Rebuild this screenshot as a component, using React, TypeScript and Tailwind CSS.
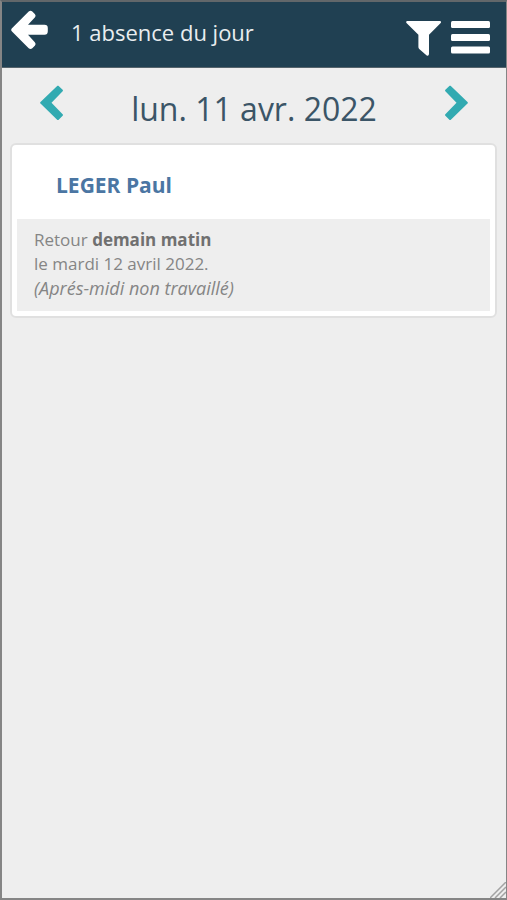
import type { ReactNode } from "react";

interface Absence {
  name: string;
  back: string;
  date: string;
  note: string;
}

const absences: Absence[] = [
  {
    name: "LEGER Paul",
    back: "demain matin",
    date: "le mardi 12 avril 2022.",
    note: "(Aprés-midi non travaillé)",
  },
];

function IconButton({ label, children }: { label: string; children: ReactNode }) {
  return (
    <button type="button" aria-label={label} className="block cursor-pointer">
      {children}
    </button>
  );
}

function Header() {
  return (
    <header className="flex h-[66px] items-start border-b border-[#56646c] bg-[#204052] pr-4 pl-[9px] text-white">
      <div className="pt-2">
        <IconButton label="Retour">
          <svg width="38" height="40" viewBox="0 0 38 40" fill="currentColor">
            <path d="M1 18.2 17.7 1.6Q19.5.2 21.3 1.5L23.8 4Q25.3 5.8 23.8 7.5L17 14.8H33.5Q36.8 14.8 36.8 18V21.3Q36.8 24.8 33.5 24.8H17L23.8 32.2Q25.3 34 23.8 35.7L21.3 38.3Q19.5 39.7 17.7 38.2L1 21.6Q-.6 19.9 1 18.2Z" />
          </svg>
        </IconButton>
      </div>
      <h1 className="ml-[22px] flex-1 pt-[15px] text-[22px] leading-[30px] text-[#e9edef]">1 absence du jour</h1>
      <div className="flex gap-[9px] pt-[19px]">
        <IconButton label="Filtrer">
          <svg width="36" height="35" viewBox="0 0 36 35" fill="currentColor">
            <path d="M1 0H34.2Q35.6.5 34.7 2L23 13.8V33Q22.8 35.3 20.7 34.5L13.2 28Q12.4 27.2 12.4 26V13.8L.5 2Q-.4.5 1 0Z" />
          </svg>
        </IconButton>
        <IconButton label="Menu">
          <svg width="39" height="35" viewBox="0 0 39 35" fill="currentColor">
            <rect width="39" height="7" rx="1.5" />
            <rect y="13" width="39" height="7" rx="1.5" />
            <rect y="25.5" width="39" height="7" rx="1.5" />
          </svg>
        </IconButton>
      </div>
    </header>
  );
}

function DayPicker() {
  return (
    <nav className="flex items-start justify-between px-[38px] text-[#32aab1]">
      <div className="pt-[17px]">
        <IconButton label="Jour précédent">
          <svg width="24" height="36" viewBox="0 0 24 36" fill="currentColor">
            <path d="M.5 17 17.4 .7 18.4 .7 22.9 5.1 22.9 6.1 11.5 17.8 22.9 29.5 22.9 30.5 18.4 35 17.4 35 .5 18.6Q-.3 17.8.5 17Z" />
          </svg>
        </IconButton>
      </div>
      <h2 className="pt-[21px] text-[32px] leading-[40px] text-[#3b5567]">lun. 11 avr. 2022</h2>
      <div className="pt-[17px]">
        <IconButton label="Jour suivant">
          <svg width="24" height="36" viewBox="0 0 24 36" fill="currentColor">
            <path d="M23.5 17 6.6 .7 5.6 .7 1.1 5.1 1.1 6.1 12.5 17.8 1.1 29.5 1.1 30.5 5.6 35 6.6 35 23.5 18.6Q24.3 17.8 23.5 17Z" />
          </svg>
        </IconButton>
      </div>
    </nav>
  );
}

function AbsenceCard({ absence }: { absence: Absence }) {
  return (
    <article className="rounded-md border-2 border-[#e0e0e0] bg-white px-[5px] pb-[5px]">
      <h3 className="px-[39px] pt-[26px] pb-5 text-[21px] leading-[28px] font-bold text-[#4b76a3]">
        {absence.name}
      </h3>
      <div className="bg-[#eeeeee] px-[17px] pt-[9px] pb-[10px] text-[17px] leading-[24px] text-[#858585]">
        <p>
          Retour <strong className="font-bold text-[#707070]">{absence.back}</strong>
        </p>
        <p>{absence.date}</p>
        <p className="text-[18px] leading-[25px] italic">{absence.note}</p>
      </div>
    </article>
  );
}

export default function App() {
  return (
    <div className="relative flex min-h-screen flex-col border-2 border-r border-[#858585] border-t-[#62676a] bg-[#eeeeee] font-['Open_Sans',sans-serif]">
      <Header />
      <DayPicker />
      <main className="flex flex-col gap-2 pt-[14px] pr-[9px] pl-2">
        {absences.map((absence) => (
          <AbsenceCard key={absence.name} absence={absence} />
        ))}
      </main>
      {/* resize grip */}
      <svg className="absolute right-0 bottom-0" width="16" height="16" viewBox="0 0 16 16" stroke="#a3a3a3" strokeWidth="1.5" fill="none" aria-hidden="true">
        <path d="M0 16 16 0M5 16 16 5M10 16 16 10" />
      </svg>
    </div>
  );
}
